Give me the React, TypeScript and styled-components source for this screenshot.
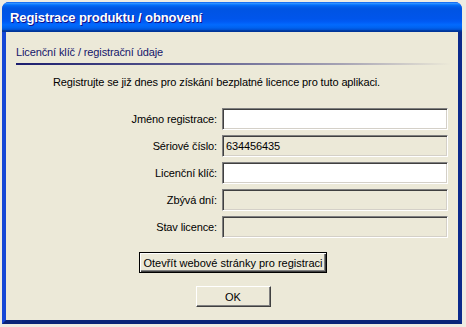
import styled, {createGlobalStyle} from 'styled-components'
import {FunctionComponent} from 'react'

const GlobalStyle = createGlobalStyle`
  html, body {
    margin: 0;
    padding: 0;
    background-color: #eeebe2;
  }
  body {
    font-family: Tahoma, "Liberation Sans", Arial, sans-serif;
    font-size: 11px;
    letter-spacing: -0.12px;
  }
`

const Window = styled.div`
  margin: 2px 0 0 2px;
  width: 460px;
  height: 322px;
  display: flex;
  flex-direction: column;
  box-sizing: border-box;
  border-radius: 7px 7px 0 0;
  background-color: #0831d9;
  overflow: hidden;
`

const TitleBar = styled.div`
  height: 30px;
  flex-shrink: 0;
  display: flex;
  align-items: center;
  padding-left: 8px;
  background: linear-gradient(to bottom, #0058ee 0%, #3593ff 4%, #288eff 6%, #127dff 8%, #036ffc 10%, #0262ee 14%, #0057e5 20%, #0054e3 24%, #0055eb 56%, #005bf5 66%, #026afe 76%, #0062ef 86%, #0052d6 92%, #0040ab 94%, #003092 100%);
`

const Title = styled.span`
  color: #fff;
  font-family: "Liberation Sans", Arial, sans-serif;
  font-weight: bold;
  font-size: 13px;
  letter-spacing: -0.1px;
  text-shadow: 1px 1px #0f1089;
`

const Frame = styled.div`
  flex: 1;
  display: flex;
  border-left: 4px solid #1547d6;
  border-right: 4px solid #0b2a8c;
  border-bottom: 4px solid #0a2478;
`

const Body = styled.div`
  flex: 1;
  background-color: #ece9d8;
  padding: 14px 8px 0 10px;
  display: flex;
  flex-direction: column;
  color: #000;
`

const TabLabel = styled.div`
  color: #14156a;
  line-height: 13px;
  padding-bottom: 4px;
  border-bottom: 2px solid transparent;
  border-image: linear-gradient(to right, #1b1d6e 0%, #5a5a8e 40%, #a6a3b4 75%, #ece9d8 100%) 1;
`

const Intro = styled.p`
  margin: 11px 0 0 37px;
  line-height: 13px;
`

const Form = styled.div`
  margin-top: 19px;
  display: grid;
  grid-template-columns: 201px 226px;
  column-gap: 5px;
  row-gap: 5px;
  align-items: center;
`

const Label = styled.label`
  text-align: right;
`

const Field = styled.div<{$enabled?: boolean}>`
  height: 22px;
  box-sizing: border-box;
  display: flex;
  align-items: center;
  padding-left: 3px;
  background-color: ${p => (p.$enabled ? '#fff' : '#ece9d8')};
  border: 1px solid;
  border-color: #808080 #fff #fff #808080;
  box-shadow: inset 1px 1px #404040, inset -1px -1px #d4d0c8;
`

const Actions = styled.div`
  margin-top: 14px;
  display: flex;
  flex-direction: column;
  align-items: center;
  gap: 13px;
`

const Button = styled.button<{$isDefault?: boolean}>`
  font: inherit;
  color: #000;
  height: 21px;
  padding: 0 3px;
  background-color: #ece9d8;
  border: 1px solid;
  border-color: ${p => (p.$isDefault ? '#000' : '#fff #404040 #404040 #fff')};
  box-shadow: ${p => (p.$isDefault
    ? 'inset 1px 1px #fff, inset -1px -1px #404040, inset -2px -2px #808080'
    : 'inset -1px -1px #808080')};
  min-width: 75px;
`

interface RowProps {
    label: string
    value?: string
    enabled?: boolean
}

const Row: FunctionComponent<RowProps> = ({label, value, enabled}) => {
    return (
        <>
            <Label>{label}</Label>
            <Field $enabled={enabled}>{value}</Field>
        </>
    )
}

const App: FunctionComponent = () => {
    return (
        <>
            <GlobalStyle/>
            <Window>
                <TitleBar>
                    <Title>Registrace produktu / obnovení</Title>
                </TitleBar>
                <Frame>
                    <Body>
                        <TabLabel>Licenční klíč / registrační údaje</TabLabel>
                        <Intro>Registrujte se již dnes pro získání bezplatné licence pro tuto aplikaci.</Intro>
                        <Form>
                            <Row label="Jméno registrace:" enabled/>
                            <Row label="Sériové číslo:" value="634456435"/>
                            <Row label="Licenční klíč:" enabled/>
                            <Row label="Zbývá dní:"/>
                            <Row label="Stav licence:"/>
                        </Form>
                        <Actions>
                            <Button $isDefault>Otevřít webové stránky pro registraci</Button>
                            <Button>OK</Button>
                        </Actions>
                    </Body>
                </Frame>
            </Window>
        </>
    )
}

export default App
